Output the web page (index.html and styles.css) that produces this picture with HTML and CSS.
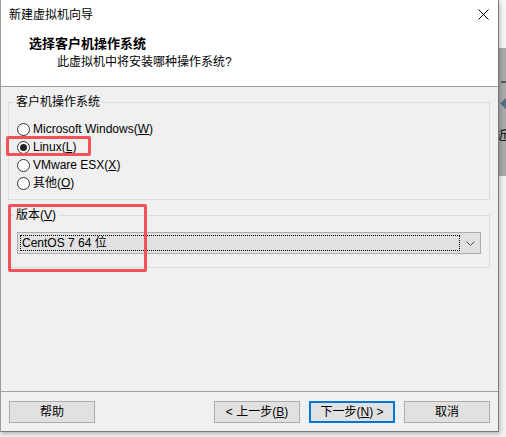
FILE: index.html
```html
<!DOCTYPE html>
<html lang="zh-CN">
<head>
<meta charset="utf-8">
<title>新建虚拟机向导</title>
<link rel="stylesheet" href="styles.css">
</head>
<body>
<div class="desktop-strip">
  <div class="strip-bar"></div>
  <div class="strip-diamond"></div>
  <span class="strip-text">近</span>
</div>

<div class="window">
  <div class="header">
    <div class="titlebar">
      <span class="title">新建虚拟机向导</span>
      <svg class="close" width="11" height="11" viewBox="0 0 11 11"><path d="M0.5 0.5 L10.5 10.5 M10.5 0.5 L0.5 10.5" stroke="#000" stroke-width="1" fill="none"/></svg>
    </div>
    <div class="heading">选择客户机操作系统</div>
    <div class="subheading">此虚拟机中将安装哪种操作系统?</div>
  </div>

  <div class="content">
    <fieldset class="group os-group">
      <legend>客户机操作系统</legend>
      <div class="radio"><span class="dot"></span><span>Microsoft Windows(<u>W</u>)</span></div>
      <div class="radio"><span class="dot checked"></span><span>Linux(<u>L</u>)</span></div>
      <div class="radio"><span class="dot"></span><span>VMware ESX(<u>X</u>)</span></div>
      <div class="radio"><span class="dot"></span><span>其他(<u>O</u>)</span></div>
    </fieldset>

    <fieldset class="group version-group">
      <legend>版本(<u>V</u>)</legend>
      <div class="select">
        <div class="select-value"><span>CentOS 7 64 位</span></div>
        <div class="select-arrow">
          <svg width="9" height="5" viewBox="0 0 9 5"><polyline points="0.5,0.5 4.5,4.5 8.5,0.5" fill="none" stroke="#555" stroke-width="1"/></svg>
        </div>
      </div>
    </fieldset>
  </div>

  <div class="footer">
    <button class="btn">帮助</button>
    <div class="nav-buttons">
      <button class="btn">&lt; 上一步(<u>B</u>)</button>
      <button class="btn primary">下一步(<u>N</u>) &gt;</button>
      <button class="btn">取消</button>
    </div>
  </div>
</div>

<div class="mark mark-linux"></div>
<div class="mark mark-version"></div>
</body>
</html>
```

FILE: styles.css
```css
* { box-sizing: border-box; }

body {
  margin: 0;
  width: 506px;
  height: 437px;
  position: relative;
  overflow: hidden;
  background: #f2f2f2;
  font-family: "Liberation Sans", "Noto Sans CJK SC", sans-serif;
  font-size: 12px;
  color: #000;
}

/* desktop behind the dialog */
.desktop-strip {
  position: absolute;
  left: 499px;
  top: 0;
  width: 7px;
  height: 437px;
  background: linear-gradient(to bottom, #f6f6f6 0, #f6f6f6 48px, #a9a9a9 48px, #a9a9a9 176px, #f0f0f0 176px);
}
.strip-bar {
  position: absolute;
  left: 2px;
  top: 81px;
  width: 5px;
  height: 2px;
  background: #4d5966;
}
.strip-diamond {
  position: absolute;
  left: 3px;
  top: 99px;
  width: 9px;
  height: 9px;
  background: #566d86;
  transform: rotate(45deg);
}
.strip-text {
  position: absolute;
  left: -3px;
  top: 129px;
  font-size: 12px;
  line-height: 14px;
  color: #000;
}

/* dialog window */
.window {
  position: absolute;
  left: 0;
  top: 0;
  width: 499px;
  height: 432px;
  background: #f0f0f0;
  border-left: 1px solid #9c9c9c;
  border-right: 1px solid #7a7a7a;
  border-bottom: 1px solid #7a7a7a;
  box-shadow: 1px 2px 4px rgba(0, 0, 0, 0.25);
  display: flex;
  flex-direction: column;
}

.header {
  height: 87px;
  background: #fff;
  border-bottom: 1px solid #a0a0a0;
  flex: none;
}
.titlebar {
  height: 30px;
  display: flex;
  align-items: center;
  justify-content: space-between;
  padding: 0 9px 0 8px;
}
.title {
  line-height: 16px;
}
.close {
  display: block;
  margin-top: -1px;
}
.heading {
  margin-top: 6px;
  padding-left: 28px;
  font-weight: bold;
  font-size: 13px;
  line-height: 16px;
}
.subheading {
  margin-top: 2px;
  padding-left: 56px;
  line-height: 16px;
}

.content {
  height: 304px;
  flex: none;
  padding-top: 8px;
}

.group {
  margin: 0 8px 0 7px;
  padding: 0 8px;
  border: 1px solid #dcdcdc;
  min-width: 0;
}
.group legend {
  padding: 0 2px;
  margin-left: -3px;
  line-height: 14px;
}

.os-group {
  padding-top: 11px;
  padding-bottom: 7px;
}
.radio {
  height: 18px;
  display: flex;
  align-items: center;
  gap: 3px;
  white-space: nowrap;
  line-height: 14px;
}
.dot {
  width: 13px;
  height: 13px;
  border: 1px solid #333;
  border-radius: 50%;
  background: #fff;
  display: flex;
  align-items: center;
  justify-content: center;
  flex: none;
}
.dot.checked::after {
  content: "";
  width: 7px;
  height: 7px;
  border-radius: 50%;
  background: #222;
}

.version-group {
  margin-top: 8px;
  padding-top: 10px;
  padding-bottom: 13px;
}
.select {
  height: 22px;
  background: #e1e1e1;
  border: 1px solid #adadad;
  display: flex;
  padding: 2px 0 2px 2px;
}
.select-value {
  flex: 1;
  border: 1px dotted #000;
  display: flex;
  align-items: center;
  padding-left: 1px;
  line-height: 14px;
}
.select-arrow {
  width: 20px;
  flex: none;
  display: flex;
  align-items: center;
  justify-content: center;
  padding-left: 1px;
}
.select-arrow svg { display: block; }

.footer {
  flex: 1;
  border-top: 1px solid #a0a0a0;
  padding: 9px 8px 0 8px;
  display: flex;
  justify-content: space-between;
  align-items: flex-start;
}
.nav-buttons {
  display: flex;
  gap: 9px;
}
.btn {
  width: 86px;
  height: 22px;
  margin: 0;
  padding: 0;
  background: #e1e1e1;
  border: 1px solid #adadad;
  border-radius: 0;
  font-family: inherit;
  font-size: 12px;
  line-height: 14px;
  color: #000;
}
.btn.primary {
  border: 2px solid #0078d7;
}

/* red annotation boxes drawn over the screenshot */
.mark {
  position: absolute;
  border: 3px solid #f2525a;
  border-radius: 2px;
}
.mark-linux {
  left: 6px;
  top: 136px;
  width: 85px;
  height: 20px;
}
.mark-version {
  left: 8px;
  top: 204px;
  width: 139px;
  height: 68px;
}
```
